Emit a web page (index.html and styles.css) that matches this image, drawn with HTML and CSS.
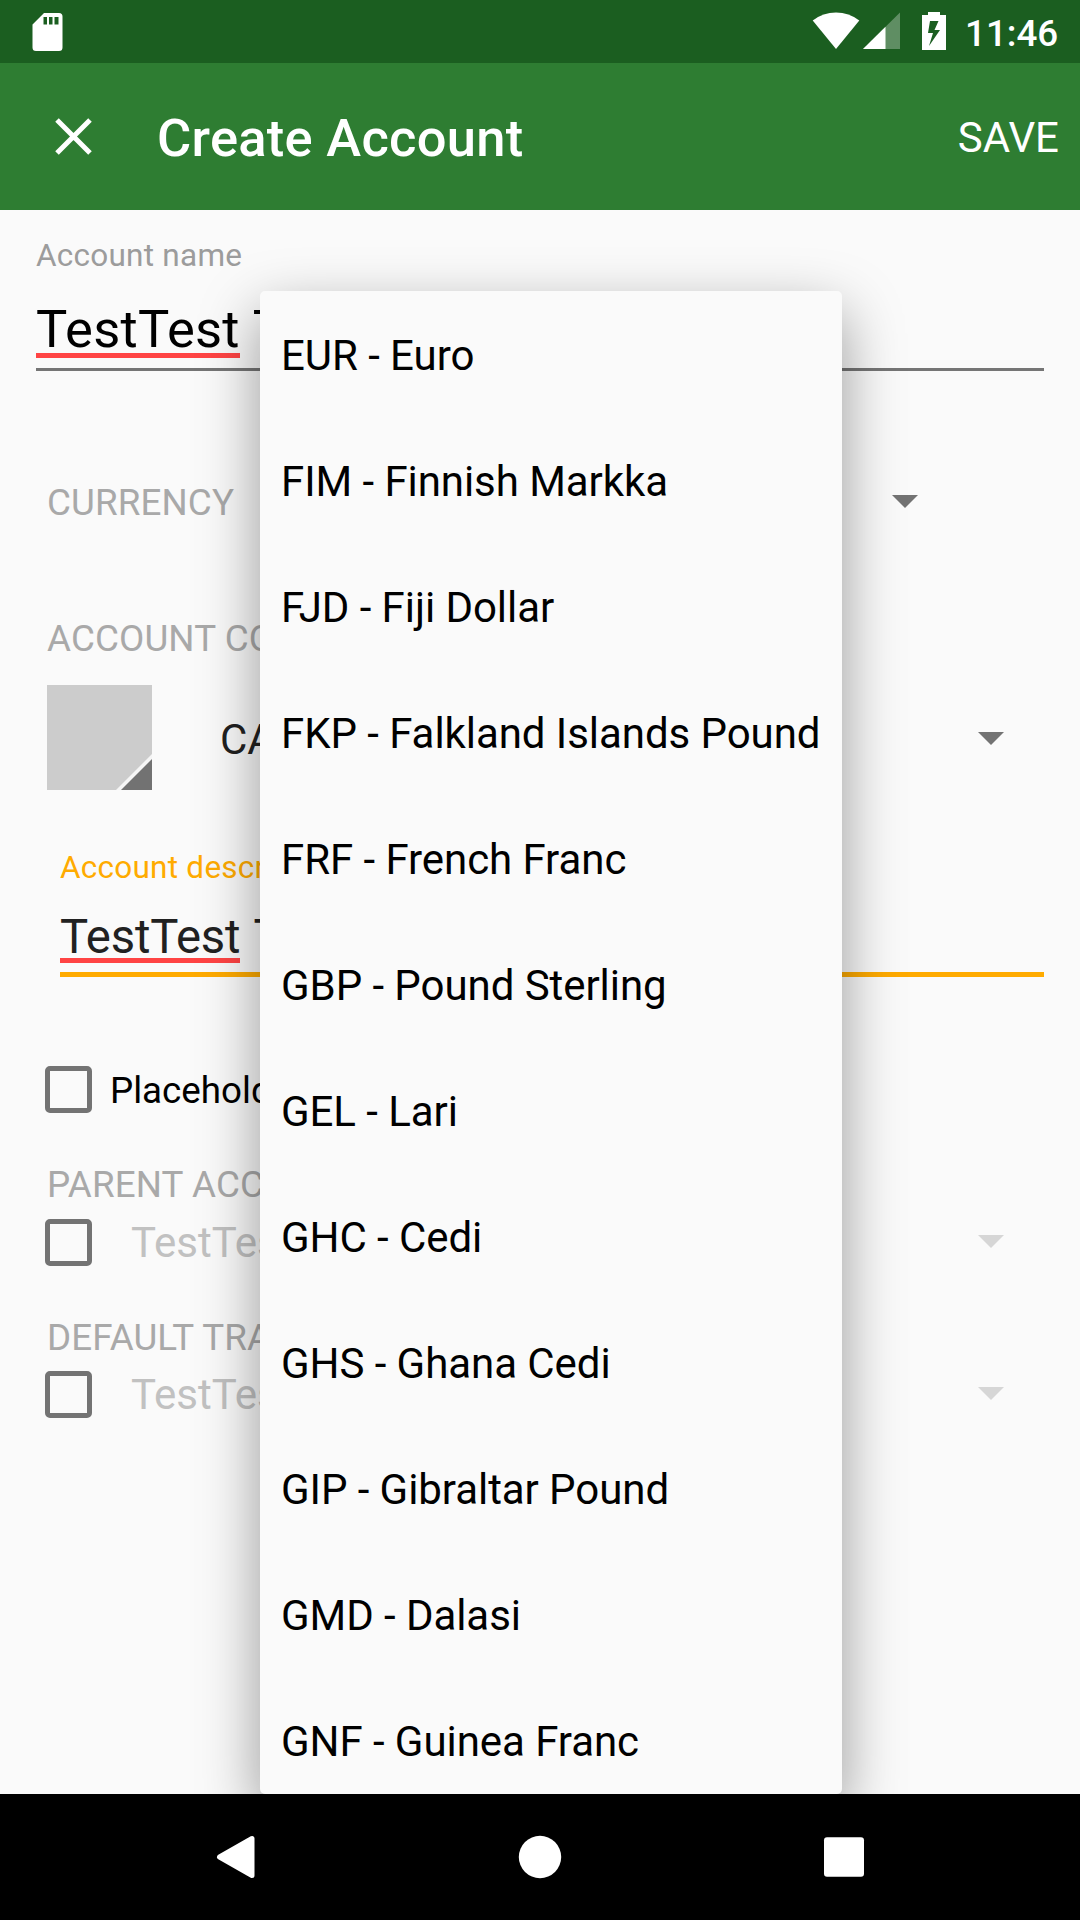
FILE: index.html
```html
<!DOCTYPE html>
<html lang="en">
<head>
<meta charset="utf-8">
<title>Create Account</title>
<link rel="stylesheet" href="styles.css">
</head>
<body>
<div class="screen">
  <header class="status-bar">
    <svg class="sd-card" width="31" height="38" viewBox="0 0 31 38"><path fill="#fff" fill-rule="evenodd" d="M12 0H27Q30.500 0 30.500 3.500V34.500Q30.500 38 27 38H4Q.5 38 .5 34.500V11.500ZM11.500 4V11.500H15V4ZM17 4V11.500H20.500V4ZM22.500 4V11.500H26.500V4Z"/></svg>
    <div class="status-icons">
      <svg class="wifi" width="48" height="38" viewBox="0 0 48 38"><path fill="#fff" d="M.7 8.500Q11 .5 24 .5T47.300 8.500L24 37Z"/></svg>
      <svg class="signal" width="37" height="38" viewBox="0 0 37 38"><path fill="#fff" fill-opacity=".3" d="M37 .5V37H0Z"/><path fill="#fff" d="M22.500 14.800V37H0Z"/></svg>
      <svg class="battery" width="24" height="38" viewBox="0 0 24 38"><path fill="#fff" fill-rule="evenodd" d="M6 0H18V3H24V38H0V3H6ZM8 9L6 21H11L7 34L18 18H12.500L16.500 9Z"/></svg>
      <span class="clock">11:46</span>
    </div>
  </header>
  <div class="app-bar">
    <svg class="close" width="38" height="38" viewBox="0 0 38 38"><path fill="none" stroke="#fff" stroke-width="5" d="M2 2L35 35M35 2L2 35"/></svg>
    <h1 class="title">Create Account</h1>
    <span class="save">SAVE</span>
  </div>
  <main class="content">
    <div class="field field-name">
      <div class="float-label">Account name</div>
      <div class="input"><span class="misspelled">TestTest</span><span>TestTest</span></div>
    </div>
    <div class="row currency-row">
      <span class="section">CURRENCY</span>
      <svg class="arrow" width="26" height="13" viewBox="0 0 26 13"><path d="M0 0H26L13 13Z"/></svg>
    </div>
    <div class="section color-label">ACCOUNT COLOR &amp; TYPE</div>
    <div class="row type-row">
      <svg class="swatch" width="105" height="105" viewBox="0 0 105 105"><path fill="#ccc" d="M0 0H105V105H0Z"/><path fill="#f5f5f5" d="M105 69V105H69Z"/><path fill="#727272" d="M105 74V105H74Z"/></svg>
      <span class="type">CASH</span>
      <svg class="arrow" width="26" height="13" viewBox="0 0 26 13"><path d="M0 0H26L13 13Z"/></svg>
    </div>
    <div class="field field-description">
      <div class="float-label">Account description</div>
      <div class="input"><span class="misspelled">TestTest</span><span>TestTest</span></div>
    </div>
    <div class="row placeholder-row">
      <span class="checkbox"></span>
      <span class="placeholder-text">Placeholder account</span>
    </div>
    <div class="section group-label parent-label">PARENT ACCOUNT</div>
    <div class="row account-row">
      <span class="checkbox"></span>
      <span class="account">TestTest</span>
      <svg class="arrow disabled" width="26" height="13" viewBox="0 0 26 13"><path d="M0 0H26L13 13Z"/></svg>
    </div>
    <div class="section group-label">DEFAULT TRANSFER ACCOUNT</div>
    <div class="row account-row">
      <span class="checkbox"></span>
      <span class="account">TestTest</span>
      <svg class="arrow disabled" width="26" height="13" viewBox="0 0 26 13"><path d="M0 0H26L13 13Z"/></svg>
    </div>
    <ul class="dropdown">
      <li>EUR - Euro</li>
      <li>FIM - Finnish Markka</li>
      <li>FJD - Fiji Dollar</li>
      <li>FKP - Falkland Islands Pound</li>
      <li>FRF - French Franc</li>
      <li>GBP - Pound Sterling</li>
      <li>GEL - Lari</li>
      <li>GHC - Cedi</li>
      <li>GHS - Ghana Cedi</li>
      <li>GIP - Gibraltar Pound</li>
      <li>GMD - Dalasi</li>
      <li>GNF - Guinea Franc</li>
    </ul>
  </main>
  <nav class="nav-bar">
    <svg width="42" height="44" viewBox="0 0 42 44"><path fill="#fff" stroke="#fff" stroke-width="5" stroke-linejoin="round" d="M3.500 22L36 3.500V40.500Z"/></svg>
    <svg width="44" height="44" viewBox="0 0 44 44"><circle cx="22" cy="22" r="21.200" fill="#fff"/></svg>
    <svg width="44" height="44" viewBox="0 0 44 44"><rect x="2" y="2.200" width="40" height="39.600" rx="3" fill="#fff"/></svg>
  </nav>
</div>
</body>
</html>
```
FILE: styles.css
```css
* { box-sizing: border-box; }

body {
  margin: 0;
  font-family: Roboto, "Noto Sans", sans-serif;
  color: #000;
  background: #fafafa;
}

svg { display: block; flex: none; }

.screen {
  display: flex;
  flex-direction: column;
  width: 1080px;
  height: 1920px;
  overflow: hidden;
}

/* Status bar */
.status-bar {
  display: flex;
  justify-content: space-between;
  height: 63px;
  padding: 12px 21px 0 32px;
  background: #1b5e20;
}
.sd-card { margin-top: 1px; }
.status-icons { display: flex; }
.signal { margin-left: 3px; }
.battery { margin-left: 22px; }
.clock {
  margin-left: 19px;
  width: 94px;
  color: #fff;
  font-size: 36.75px;
  font-weight: 500;
  line-height: 43px;
  white-space: nowrap;
}

/* App bar */
.app-bar {
  display: flex;
  align-items: center;
  height: 147px;
  padding: 0 21px 0 55px;
  color: #fff;
  background: #2e7d32;
}
.title {
  flex: 1;
  margin: 3px 0 0 64px;
  font-size: 52.5px;
  font-weight: 500;
  line-height: 62px;
  letter-spacing: .27px;
}
.save { font-size: 42px; line-height: 50px; margin-top: 2px; }

/* Form */
.content {
  position: relative;
  flex: none;
  height: 1584px;
  padding: 25px 36px 0;
  overflow: hidden;
  white-space: nowrap;
}
.row { display: flex; align-items: center; }
.float-label { font-size: 31.5px; line-height: 42px; letter-spacing: .25px; }
.input { display: flex; gap: 13px; align-items: flex-start; }
.misspelled { border-bottom: 5px solid #ff4444; }

.field-name .float-label { color: #9c9c9c; }
.field-name .input {
  margin-top: 29px;
  padding-bottom: 10px;
  border-bottom: 3px solid #757575;
  font-size: 52.5px;
  line-height: 47px;
  letter-spacing: .25px;
}

.section {
  color: #a9a9a9;
  font-size: 36.75px;
  line-height: 48px;
  letter-spacing: .12px;
}
.arrow { margin-left: auto; fill: #737373; }
.arrow.disabled { fill: #d6d6d6; }

.currency-row { margin-top: 108px; padding: 0 126px 0 11px; }
.currency-row .arrow { margin-bottom: 4px; }
.color-label { margin: 88px 0 0 11px; }
.type-row { margin-top: 22px; padding: 0 40px 0 11px; }
.type-row .arrow { margin-top: 2px; }
.type { margin: 4px 0 0 68px; color: #212121; font-size: 42px; }

.field-description { margin: 57px 0 0 24px; }
.field-description .float-label { color: #ffab00; }
.field-description .input {
  margin-top: 27px;
  padding-bottom: 9px;
  border-bottom: 5px solid #ffab00;
  color: #212121;
  font-size: 47.25px;
  line-height: 42px;
  letter-spacing: -.15px;
}

.checkbox {
  flex: none;
  width: 47px;
  height: 47px;
  border: 5px solid #737373;
  border-radius: 5px;
}
.placeholder-row { margin-top: 88px; padding-left: 8.5px; height: 48px; }
.placeholder-text { margin: 2px 0 0 18.5px; font-size: 36.75px; }
.group-label { margin: 48px 0 0 11px; }
.account-row { height: 47px; margin-top: 9px; padding: 0 40px 0 8.5px; }
.account-row .arrow { margin-bottom: 2px; }
.parent-label + .account-row { height: 48px; }
.account { margin-left: 39.5px; color: #c1c1c1; font-size: 42px; }

/* Currency dropdown, laid over the form */
.dropdown {
  position: absolute;
  top: 81px;
  left: 260px;
  width: 582px;
  height: 1503px;
  margin: 0;
  padding: 2px 0 0 21px;
  overflow: hidden;
  list-style: none;
  background: #fafafa;
  border-radius: 5px;
  box-shadow: 0 22px 60px rgba(0, 0, 0, .4);
}
.dropdown li {
  height: 126px;
  font-size: 42px;
  line-height: 126px;
  letter-spacing: -.06px;
}

/* Navigation bar */
.nav-bar {
  display: flex;
  justify-content: space-between;
  align-items: center;
  flex: none;
  height: 126px;
  padding: 0 214px 0 216px;
  background: #000;
}
```
